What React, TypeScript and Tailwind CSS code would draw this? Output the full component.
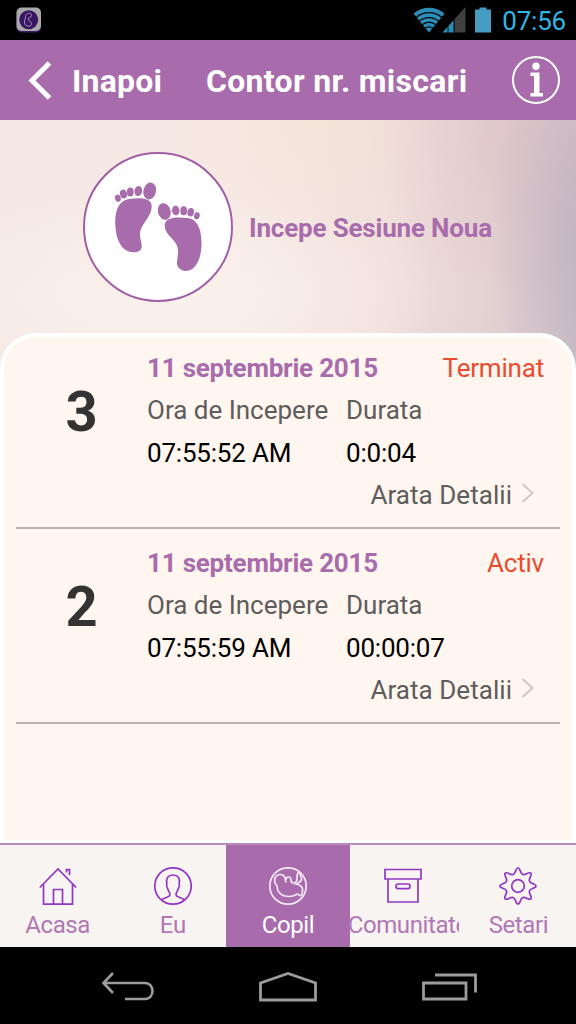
import React from 'react';

interface Session {
  id: number;
  date: string;
  status: string;
  start: string;
  duration: string;
}

const sessions: Session[] = [
  { id: 3, date: '11 septembrie 2015', status: 'Terminat', start: '07:55:52 AM', duration: '0:0:04' },
  { id: 2, date: '11 septembrie 2015', status: 'Activ', start: '07:55:59 AM', duration: '00:00:07' },
];

const StatusBar: React.FC = () => (
  <div className="flex h-10 shrink-0 items-center bg-black pl-4 pr-[10px]">
    <svg width="26" height="26" viewBox="0 0 26 26" fill="none">
      <rect x="0.5" y="1.5" width="24.5" height="24" rx="5" fill="#3b1e66" />
      <rect x="0.5" y="0.5" width="24.5" height="23.5" rx="5" fill="#a9a9a9" />
      <circle cx="12.7" cy="12.7" r="9.5" fill="#391661" />
      <path
        d="M9.500 9.500c0-4 6-4.500 6-1 0 2-2.500 1.500-3 2.500-.5 1.500 0 2.500 1.500 3.500 2.500 1.500 2 4-.5 4.500-3 .6-5-1-5-4 0-2 1-3 1-5.500z"
        stroke="#a795bd"
        strokeWidth="1"
      />
    </svg>
    <div className="ml-auto flex items-center">
      {/* Wifi */}
      <svg width="32" height="26" viewBox="0 0 32 26" fill="none">
        <path d="M0.500 6.500C9.500 -1.300 22.500 -1.300 31.500 6.500L16 25.500z" fill="#2b8eb8" />
        <g stroke="#000" strokeWidth="1.2">
          <path d="M3 10.500c7.500-6.500 18.500-6.500 26 0" />
          <path d="M6 14.300c6-5 14-5 20 0" />
          <path d="M9 17.800c4.300-3.400 9.700-3.400 14 0" />
          <path d="M12 21.300c2.500-1.900 5.500-1.900 8 0" />
        </g>
      </svg>
      {/* Signal */}
      <svg className="-ml-[3px]" width="24" height="26" viewBox="0 0 24 26">
        <path d="M23.500 0v25.500H12.500V12.200z" fill="#404040" />
        <path d="M0.500 25.500L11.500 13.200v12.300z" fill="#2b8eb8" />
        <path d="M6 19v7" stroke="#000" strokeWidth="0.8" />
      </svg>
      {/* Battery */}
      <svg className="ml-[8px]" width="18" height="26" viewBox="0 0 18 26">
        <path d="M1 2.500h4.500V0.500h7v2H17V25.500H1z" fill="#459dc3" />
      </svg>
      <span className="ml-[10px] pt-0.5 text-[26px] leading-[38px] tracking-[-0.2px] text-[#33b5e5]">07:56</span>
    </div>
  </div>
);

const Header: React.FC = () => (
  <header className="flex h-20 shrink-0 items-center bg-[#a86cac] pl-7 pr-4 pt-px text-[32px] font-bold text-white">
    <svg width="25" height="40" viewBox="0 0 25 40" fill="none" stroke="white" strokeWidth="5">
      <path d="M21.500 2L4 19.500l17.500 17.500" />
    </svg>
    <span className="ml-[19px] w-[134px] tracking-[0.2px]">Inapoi</span>
    <h1 className="whitespace-nowrap tracking-[0.300px]">Contor nr. miscari</h1>
    <svg className="-mt-px ml-auto" width="48" height="48" viewBox="0 0 48 48" fill="none">
      <circle cx="24" cy="24" r="23" stroke="white" strokeWidth="2" />
      <circle cx="24" cy="10.300" r="3.700" fill="white" />
      <path d="M18.500 16.500h9v20.500h3.500v3.500H18.500v-3.500h3.500V20h-3.500z" fill="white" />
    </svg>
  </header>
);

const Footprints: React.FC = () => (
  <svg width="150" height="150" viewBox="0 0 150 150">
    <circle cx="75" cy="75" r="74" fill="white" stroke="#a05fa5" strokeWidth="2" />
    <g fill="#a86cac">
      <path d="M32.500 75C31.500 62 34 49 46 47C54 46 61 46 65 48C71 51 69 60 64 67C60 73 56.500 77 57 84C57.500 89 60 94 58 97.500C54 102 45 101 40 96C35 90 33 83 32.500 75z" />
      <ellipse cx="66.700" cy="39" rx="6.300" ry="8.500" transform="rotate(14 66.700 39)" />
      <ellipse cx="55.300" cy="39" rx="3.800" ry="5.100" transform="rotate(8 55.300 39)" />
      <ellipse cx="47.300" cy="40" rx="3.400" ry="4.600" />
      <ellipse cx="40.500" cy="42" rx="3.500" ry="4.400" transform="rotate(-15 40.500 42)" />
      <ellipse cx="34.900" cy="46.200" rx="2.900" ry="3.700" transform="rotate(-15 34.900 46.200)" />
      <path d="M118.500 94C119 81 116 67.500 105 66C97 65 89 65 85 67.500C79.500 71 81.500 78 86 83.500C90.500 88.500 95 92 95 99C95.500 105 92.500 111 95 115C99 120.500 107 120 111.500 115C116.500 109 118 102 118.500 94z" />
      <ellipse cx="81.300" cy="59.500" rx="6.300" ry="8.500" transform="rotate(-16 81.300 59.500)" />
      <ellipse cx="92.700" cy="58.400" rx="3.700" ry="4.800" transform="rotate(-8 92.700 58.400)" />
      <ellipse cx="100.700" cy="58.800" rx="3.400" ry="4.500" />
      <ellipse cx="107.700" cy="60.200" rx="3.300" ry="4.300" transform="rotate(10 107.700 60.200)" />
      <ellipse cx="113.900" cy="63.700" rx="2.800" ry="3.600" transform="rotate(15 113.900 63.700)" />
    </g>
  </svg>
);

const SessionRow: React.FC<{ session: Session }> = ({ session }) => (
  <li className="mx-3 flex h-[195px] border-b-2 border-[#bbb2b1] pt-[13px] pr-4 text-[26px] leading-[42.300px]">
    <div className="w-[131px] shrink-0 pt-[30px] text-center text-[56px] font-bold leading-[70px] text-[#333]">
      {session.id}
    </div>
    <div className="flex-1">
      <div className="flex justify-between">
        <span className="font-bold tracking-[-0.220px] text-[#a86cac]">{session.date}</span>
        <span className="tracking-[-0.200px] text-[#ea4b2e]">{session.status}</span>
      </div>
      <div className="grid grid-cols-[199px_1fr] whitespace-nowrap">
        <span className="text-[#5e5c5c]">Ora de Incepere</span>
        <span className="text-[#5e5c5c]">Durata</span>
        <span className="tracking-[-0.200px] text-black">{session.start}</span>
        <span className="tracking-[-0.200px] text-black">{session.duration}</span>
      </div>
      <div className="flex items-center justify-end pr-[9px] text-[#5e5c5c]">
        <span className="tracking-[0.040px]">Arata Detalii</span>
        <svg className="-mt-1 ml-[9px]" width="14" height="20" viewBox="0 0 14 20" fill="none">
          <path d="M1.500 1l10 9-10 9" stroke="#cfc9c5" strokeWidth="2" />
        </svg>
      </div>
    </div>
  </li>
);

const HomeIcon = () => (
  <>
    <path d="M0.800 20.500L19 2l18.200 18.500M4.500 17v20.200h29V17M14.500 37V22.500h9V37" />
    <path d="M26.500 2.700h4v5.500M27.500 3v2.500" />
  </>
);

const ProfileIcon = () => (
  <>
    <circle cx="19" cy="19" r="18.200" />
    <path d="M7.500 33c2-2.500 8.500-2.500 8.500-5.500 0-2.500-2-3.500-2.500-6.500-1.500-2-1-3-.7-4.500-1-5.500 1.200-8.500 6.200-8.500s7.200 3 6.200 8.500c.3 1.500.8 2.500-.7 4.500-.5 3-2.500 4-2.500 6.500 0 3 6.500 3 8.500 5.500" />
  </>
);

const BabyIcon = () => (
  <>
    <circle cx="19" cy="19" r="18.200" />
    <path d="M17 15.500c-.5-2-.5-4-1.500-6-2-3-7-2.500-9 .5-1.500 3-1 6 1.200 8.500.8 1 .3 2.500 1 4.500 2 5 6.500 6.500 11.300 6.500 4.500 0 6.500-1.500 8.500-2.500 1.500.5 1.500 2 3.500 1.500 1.500-.5 1-2.500 1.500-4 .5-3.500-.5-6.500-6.500-7.500 2-1 5-2 5.500-4.500.3-2.500-1.500-4-2-7" />
    <path d="M17 13c0-4 5-4 5 0 0 2 .5 3 2.500 3 2.500-.5 4-2 3.500-4.500-.5-2 0-4.500 1.500-6.500" />
  </>
);

const BoxIcon = () => (
  <>
    <path d="M1 2.500h36v9.500H1zM4 12v23h30V12" />
    <rect x="12" y="17" width="14" height="4.700" rx="2.200" />
  </>
);

const GearIcon = () => (
  <>
    <circle cx="19" cy="19" r="6.300" />
    <path d="M19 1c2.500 0 2 5.500 4.800 6.500 3 1.300 6-3.300 8-1.300s-2.500 5-1.300 8C31.500 17 37 16.500 37 19s-5.500 2-6.500 4.800c-1.200 3 3.300 6 1.300 8s-5-2.500-8-1.300C21 31.500 21.500 37 19 37s-2-5.500-4.800-6.500c-3-1.200-6 3.300-8 1.300s2.500-5 1.300-8C6.500 21 1 21.500 1 19s5.500-2 6.500-4.800c1.200-3-3.300-6-1.300-8s5 2.600 8 1.300C17 6.500 16.500 1 19 1z" />
  </>
);

const tabs = [
  { label: 'Acasa', icon: <HomeIcon /> },
  { label: 'Eu', icon: <ProfileIcon /> },
  { label: 'Copil', icon: <BabyIcon />, active: true },
  { label: 'Comunitate', icon: <BoxIcon /> },
  { label: 'Setari', icon: <GearIcon /> },
];

const TabBar: React.FC = () => (
  <nav className="flex h-[104px] shrink-0 border-t-2 border-[#b98bbf] bg-[#f8f4f1] text-[24px]">
    {tabs.map((tab) => (
      <div
        key={tab.label}
        className={`flex min-w-0 flex-1 flex-col items-center pt-[22px] ${
          tab.active ? '-mx-1 box-content bg-[#a86cac] px-1 text-white' : 'text-[#b078b4]'
        }`}
      >
        <svg
          width="38"
          height="39"
          viewBox="0 0 38 39"
          fill="none"
          stroke={tab.active ? '#f3e6f5' : '#9436c4'}
          strokeWidth="1.7"
        >
          {tab.icon}
        </svg>
        <span className="relative w-[111px] overflow-hidden text-center leading-[38px] tracking-[-0.400px]">
          {tab.label}
        </span>
      </div>
    ))}
  </nav>
);

const SystemNav: React.FC = () => (
  <div className="flex h-[77px] shrink-0 items-center justify-between bg-black pl-[101px] pr-[99px] pt-0.5">
    <svg width="54" height="32" viewBox="0 0 54 32" fill="none" stroke="#9c9c9c" strokeWidth="2.600">
      <path d="M12 2L2.500 12 12 22M3 12h41c10 0 10 16 0 16H24" />
    </svg>
    <svg className="-ml-[1px]" width="60" height="34" viewBox="0 0 60 34" fill="none" stroke="#9c9c9c" strokeWidth="2.800">
      <path d="M2.500 13L30 3.500 57.500 13v17h-55z" />
    </svg>
    <svg width="55" height="32" viewBox="0 0 55 32" fill="none" stroke="#9c9c9c" strokeWidth="2.800">
      <path d="M1.500 12h42.500v16H1.500zM13 4h40.500v17.500" />
    </svg>
  </div>
);

const App: React.FC = () => {
  return (
    <div className="flex h-[1024px] w-[576px] flex-col overflow-hidden bg-black font-[Roboto,sans-serif]">
      <StatusBar />
      <Header />
      <main className="flex h-[723px] flex-col bg-[radial-gradient(110px_200px_at_600px_110px,#b3a9bb99_0%,#b3a9bb00_100%),radial-gradient(150px_170px_at_505px_0px,#dabbc180_0%,#dabbc100_100%),radial-gradient(190px_130px_at_320px_0px,#f4e3d7b3_0%,#f4e3d700_100%),radial-gradient(280px_110px_at_160px_175px,#faf1ea_0%,#faf1ea00_100%),linear-gradient(95deg,#f5e8e5_0%,#f7eae5_38%,#f1e0dc_62%,#e5d2d2_78%,#d0c1c9_92%,#c1b4c4_100%)]">
        <section className="flex h-[213px] shrink-0 items-center pl-[83px]">
          <Footprints />
          <span className="ml-4 pt-[3px] text-[26px] font-bold tracking-[-0.180px] text-[#a86cac]">
            Incepe Sesiune Noua
          </span>
        </section>
        <ul className="flex-1 rounded-t-[36px] border-4 border-b-[3px] border-white bg-[#fff6ef] [&>li:first-child]:h-[192px] [&>li:first-child]:pt-[10px]">
          {sessions.map((session) => (
            <SessionRow key={session.id} session={session} />
          ))}
        </ul>
      </main>
      <TabBar />
      <SystemNav />
    </div>
  );
};

export default App;
